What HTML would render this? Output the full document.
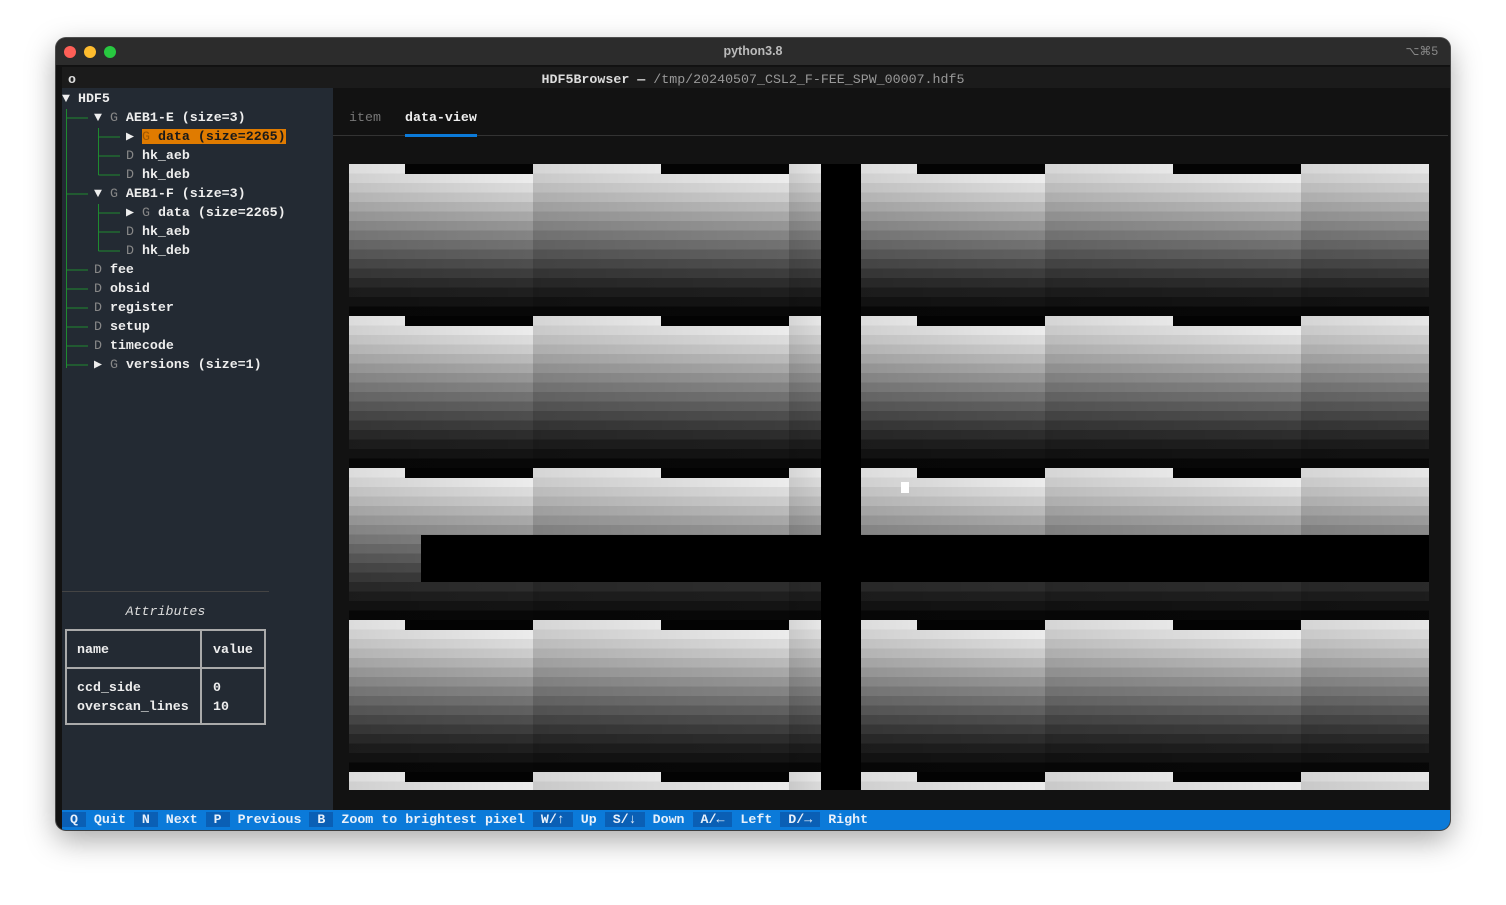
<!DOCTYPE html>
<html><head><meta charset="utf-8"><style>
*{margin:0;padding:0;box-sizing:border-box}
body{width:1506px;height:905px;background:#fff;position:relative;overflow:hidden;font-family:"Liberation Mono",monospace;font-size:13.3px}
.win{position:absolute;left:56px;top:38px;width:1394px;height:792px;border-radius:10px;background:#121212;overflow:hidden;box-shadow:0 10px 30px rgba(0,0,0,.35),0 0 0 1px #555}
.tb{position:absolute;left:0;top:0;width:100%;height:28px;background:#2c2c2c;border-bottom:1px solid #111}
.dot{position:absolute;top:8px;width:12px;height:12px;border-radius:50%}
.a{position:absolute;white-space:pre;line-height:19px}
.left{position:absolute;left:6px;top:50px;width:271px;height:722px;background:#232a33}
.left .a{font-weight:bold}
.g{color:#888;font-weight:normal}
.foot{position:absolute;left:6px;top:772px;width:1388px;height:20px;background:#0b7ad9;color:#e8f0fa;line-height:20px;white-space:pre;font-weight:bold}
.foot b{background:#0a5fb5;font-weight:bold}
.img{position:absolute;left:349px;top:164px;width:1080px;height:626px;overflow:hidden;
background:
linear-gradient(90deg,rgba(0,0,0,.12),rgba(0,0,0,0) 184px,rgba(0,0,0,.15) 184px,rgba(0,0,0,0) 440px,rgba(0,0,0,.15) 440px,rgba(0,0,0,.08) 472px,transparent 472px,transparent 512px,rgba(0,0,0,.12) 512px,rgba(0,0,0,0) 696px,rgba(0,0,0,.15) 696px,rgba(0,0,0,0) 952px,rgba(0,0,0,.15) 952px,rgba(0,0,0,.08) 1080px),
repeating-linear-gradient(180deg,#fafafa 0,#fafafa 9.5px,#ececec 9.5px,#ececec 19px,#dcdcdc 19px,#dcdcdc 28.5px,#cccccc 28.5px,#cccccc 38px,#bababa 38px,#bababa 47.5px,#a8a8a8 47.5px,#a8a8a8 57px,#969696 57px,#969696 66.5px,#848484 66.5px,#848484 76px,#727272 76px,#727272 85.5px,#606060 85.5px,#606060 95px,#4e4e4e 95px,#4e4e4e 104.5px,#3d3d3d 104.5px,#3d3d3d 114px,#2d2d2d 114px,#2d2d2d 123.5px,#1f1f1f 123.5px,#1f1f1f 133px,#141414 133px,#141414 142.5px,#080808 142.5px,#080808 152px)}
.k{position:absolute;background:#030303;height:9.5px}
</style></head><body>
<div class="win">
<div class="tb">
<div class="dot" style="left:8px;background:#fe5f57"></div>
<div class="dot" style="left:28px;background:#febc2e"></div>
<div class="dot" style="left:48px;background:#28c840"></div>
<div class="a" style="left:0;width:1394px;text-align:center;top:4px;color:#bbb;font-family:'Liberation Sans',sans-serif;font-weight:bold;font-size:12.5px">python3.8</div>
<div class="a" style="right:12px;top:4px;color:#888;font-family:'Liberation Sans',sans-serif;font-size:12px">⌥⌘5</div>
</div>
<div style="position:absolute;left:6px;top:29px;width:1388px;height:21px;background:#1b1b1b"></div>
<div class="a" style="left:12px;top:32px;color:#ddd;font-weight:bold">o</div>
<div class="a" style="left:0;width:1394px;text-align:center;top:32px;color:#ddd;font-weight:bold">HDF5Browser — <span style="color:#999;font-weight:normal">/tmp/20240507_CSL2_F-FEE_SPW_00007.hdf5</span></div>
<div class="left">
<svg style="position:absolute;left:0;top:1px" width="271" height="300" stroke="#1f8a2f" stroke-width="1" fill="none">
<path d="M4.5 20V279M4.5 29H26M4.5 105H26M4.5 181H26M4.5 200H26M4.5 219H26M4.5 238H26M4.5 257H26M4.5 276H26"/>
<path d="M36.5 39V86M36.5 48H58M36.5 67H58M36.5 86H58M36.5 115V162M36.5 124H58M36.5 143H58M36.5 162H58"/>
</svg>
<div style="position:absolute;left:0;top:1px">
<div class="a" style="left:0;top:0;color:#eee">▼ HDF5</div>
<div class="a" style="left:32px;top:19px;color:#eee">▼ <span class="g">G</span> AEB1-E (size=3)</div>
<div class="a" style="left:64px;top:38px;color:#eee">▶ <span style="background:#e07b00;color:#1a1a1a"><span style="color:#a05800;font-weight:normal">G</span> data (size=2265)</span></div>
<div class="a" style="left:64px;top:57px;color:#eee"><span class="g">D</span> hk_aeb</div>
<div class="a" style="left:64px;top:76px;color:#eee"><span class="g">D</span> hk_deb</div>
<div class="a" style="left:32px;top:95px;color:#eee">▼ <span class="g">G</span> AEB1-F (size=3)</div>
<div class="a" style="left:64px;top:114px;color:#eee">▶ <span class="g">G</span> data (size=2265)</div>
<div class="a" style="left:64px;top:133px;color:#eee"><span class="g">D</span> hk_aeb</div>
<div class="a" style="left:64px;top:152px;color:#eee"><span class="g">D</span> hk_deb</div>
<div class="a" style="left:32px;top:171px;color:#eee"><span class="g">D</span> fee</div>
<div class="a" style="left:32px;top:190px;color:#eee"><span class="g">D</span> obsid</div>
<div class="a" style="left:32px;top:209px;color:#eee"><span class="g">D</span> register</div>
<div class="a" style="left:32px;top:228px;color:#eee"><span class="g">D</span> setup</div>
<div class="a" style="left:32px;top:247px;color:#eee"><span class="g">D</span> timecode</div>
<div class="a" style="left:32px;top:266px;color:#eee">▶ <span class="g">G</span> versions (size=1)</div>
</div>
<div style="position:absolute;left:0;top:503px;width:207px;height:1px;background:#444"></div>
<div class="a" style="left:0;width:207px;text-align:center;top:514px;color:#ddd;font-style:italic;font-weight:normal">Attributes</div>
<div style="position:absolute;left:3px;top:541px;width:201px;height:96px;border:2px solid #aaa"></div>
<div style="position:absolute;left:138px;top:541px;width:2px;height:96px;background:#aaa"></div>
<div style="position:absolute;left:3px;top:579px;width:201px;height:2px;background:#aaa"></div>
<div class="a" style="left:15px;top:552px;color:#eee">name</div>
<div class="a" style="left:151px;top:552px;color:#eee">value</div>
<div class="a" style="left:15px;top:590px;color:#eee">ccd_side
overscan_lines</div>
<div class="a" style="left:151px;top:590px;color:#eee">0
10</div>
</div>
<div class="a" style="left:293px;top:70px;color:#777">item</div>
<div class="a" style="left:349px;top:70px;color:#eee;font-weight:bold">data-view</div>
<div style="position:absolute;left:277px;top:97px;width:1115px;height:1px;background:#333"></div>
<div style="position:absolute;left:349px;top:96px;width:72px;height:3px;background:#0b7ad9"></div>
<div class="foot"><b> Q </b> Quit <b> N </b> Next <b> P </b> Previous <b> B </b> Zoom to brightest pixel <b> W/↑ </b> Up <b> S/↓ </b> Down <b> A/← </b> Left <b> D/→ </b> Right</div>
</div>
<div class="img">
<div class="k" style="left:56px;width:128px;top:0"></div><div class="k" style="left:312px;width:128px;top:0"></div><div class="k" style="left:568px;width:128px;top:0"></div><div class="k" style="left:824px;width:128px;top:0"></div>
<div class="k" style="left:56px;width:128px;top:152px"></div><div class="k" style="left:312px;width:128px;top:152px"></div><div class="k" style="left:568px;width:128px;top:152px"></div><div class="k" style="left:824px;width:128px;top:152px"></div>
<div class="k" style="left:56px;width:128px;top:304px"></div><div class="k" style="left:312px;width:128px;top:304px"></div><div class="k" style="left:568px;width:128px;top:304px"></div><div class="k" style="left:824px;width:128px;top:304px"></div>
<div class="k" style="left:56px;width:128px;top:456px"></div><div class="k" style="left:312px;width:128px;top:456px"></div><div class="k" style="left:568px;width:128px;top:456px"></div><div class="k" style="left:824px;width:128px;top:456px"></div>
<div class="k" style="left:56px;width:128px;top:608px"></div><div class="k" style="left:312px;width:128px;top:608px"></div><div class="k" style="left:568px;width:128px;top:608px"></div><div class="k" style="left:824px;width:128px;top:608px"></div>
<div style="position:absolute;left:472px;top:0;width:40px;height:626px;background:#000"></div>
<div style="position:absolute;left:72px;top:371px;width:1008px;height:47px;background:#000"></div>
<div style="position:absolute;left:552px;top:318px;width:8px;height:11px;background:#fff"></div>
</div>
</body></html>
